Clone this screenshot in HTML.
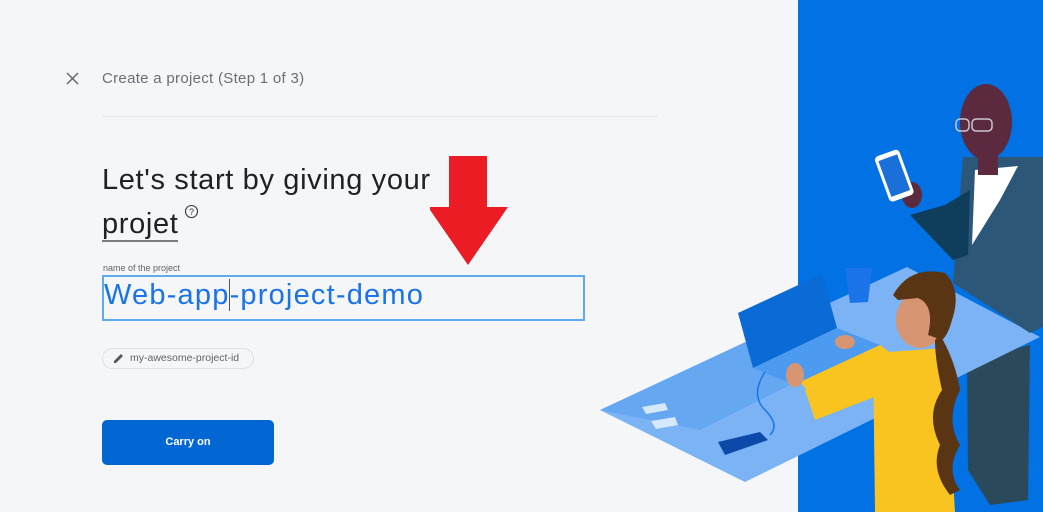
<!DOCTYPE html>
<html><head><meta charset="utf-8"><style>
html,body{margin:0;padding:0;width:1043px;height:512px;overflow:hidden;background:#f5f6f8;font-family:"Liberation Sans",sans-serif;position:relative}
.abs{position:absolute}
</style></head><body>
<div class="abs" style="left:798px;top:0;width:245px;height:512px;background:#0171e3"></div>

<svg class="abs" style="left:0;top:0" width="1043" height="512">
  <polygon points="967,360 1030,345 1028,500 990,505 968,470" fill="#2a4a5c"/>
  <polygon points="600,410 907,267 1040,337 745,482" fill="#7bb3f5"/>
  <polygon points="600,410 760,335 800,380 700,430" fill="#5ea2f0" opacity="0.7"/>
  <polygon points="738,313 822,274 837,328 753,368" fill="#0a6ad6"/>
  <polygon points="753,368 837,328 880,345 795,385" fill="#4d9bf0"/>
  <path d="M765,372 Q750,395 765,410 Q780,425 770,435" stroke="#1a73e8" stroke-width="1.5" fill="none"/>
  <polygon points="718,442 760,432 768,440 725,455" fill="#0b4aa8"/>
  <polygon points="642,407 665,403 668,410 646,414" fill="#d6e8fb"/>
  <polygon points="651,421 675,417 678,425 656,429" fill="#d6e8fb"/>
  <polygon points="845,268 872,268 868,302 850,303" fill="#1a73e8"/>
  <polygon points="963,157 1043,157 1043,327 1030,333 953,283" fill="#2d5778"/>
  <polygon points="945,205 970,190 968,255 953,260 910,215" fill="#0e3e5c"/>
  <polygon points="975,170 1018,166 1000,200 972,245" fill="#fff"/>
  <ellipse cx="986" cy="122" rx="26" ry="38" fill="#5c2a3e"/>
  <rect x="978" y="150" width="20" height="25" fill="#5c2a3e"/>
  <rect x="956" y="119" width="13" height="12" rx="4" fill="none" stroke="#c9c6d0" stroke-width="1.5"/>
  <rect x="972" y="119" width="20" height="12" rx="4" fill="none" stroke="#c9c6d0" stroke-width="1.5"/>
  <ellipse cx="912" cy="195" rx="10" ry="13" fill="#5c2a3e"/>
  <g transform="rotate(-20 893 175)"><rect x="881" y="152" width="26" height="48" rx="4" fill="#fff"/><rect x="884" y="157" width="20" height="38" fill="#1a6fd8"/></g>
  <path d="M800,382 L880,345 L900,360 L818,403 Z" fill="#f9c320"/>
  <path d="M873,353 L945,348 L955,512 L875,512 Z" fill="#f9c320"/>
  <path d="M805,390 L900,365 L905,385 L815,420 Z" fill="#f9c320"/>
  <ellipse cx="795" cy="375" rx="9" ry="12" fill="#d79572"/>
  <ellipse cx="845" cy="342" rx="10" ry="7" fill="#d79572"/>
  <ellipse cx="920" cy="320" rx="24" ry="28" fill="#d79572"/>
  <path d="M893,295 Q910,265 945,273 Q962,290 952,320 Q948,335 942,340 L928,335 Q935,305 918,298 L898,300 Z" fill="#5a3514"/>
  <path d="M940,335 Q955,360 960,390 Q945,420 960,445 Q945,470 960,490 L950,495 Q930,470 940,445 Q925,415 942,390 Q935,360 935,340 Z" fill="#5a3514"/>
</svg>

<svg class="abs" style="left:66px;top:72px" width="13" height="13"><path d="M1,1 L12,12 M12,1 L1,12" stroke="#666" stroke-width="1.5"/></svg>
<div class="abs" style="left:102px;top:70px;font-size:15px;letter-spacing:0.3px;color:#6b6f75">Create a project (Step 1 of 3)</div>
<div class="abs" style="left:102px;top:116px;width:556px;height:1px;background:#e3e5e8"></div>

<div class="abs" style="left:102px;top:158px;font-size:29px;letter-spacing:0.65px;color:#202124;line-height:44px">Let's start by giving your<br><span style="border-bottom:2px solid #7a7d82">projet</span></div>
<svg class="abs" style="left:184px;top:204px" width="15" height="15"><circle cx="7.5" cy="7.5" r="6" fill="none" stroke="#333" stroke-width="1.1"/><text x="7.5" y="11" font-size="9" text-anchor="middle" fill="#333" font-family="Liberation Sans">?</text></svg>

<svg class="abs" style="left:430px;top:155px" width="80" height="112"><polygon points="17,1 55,1 55,52 76,52 36,110 -4,52 17,52" fill="#ec1c24" transform="translate(2,0)"/></svg>

<div class="abs" style="left:103px;top:263px;font-size:9px;color:#5f6368">name of the project</div>
<div class="abs" style="left:102px;top:275px;width:479px;height:42px;border:2px solid #62aaf0;box-sizing:content-box;margin:-0.5px"></div>
<div class="abs" style="left:104px;top:279px;font-size:29px;letter-spacing:1.2px;color:#1a73e8">Web-app<span style="border-left:1px solid #555;margin-left:-1px"></span>-project-demo</div>

<div class="abs" style="left:102px;top:348px;width:152px;height:21px;border:1px solid #dcdfe3;border-radius:11px;box-sizing:border-box"></div>
<svg class="abs" style="left:113px;top:352px" width="12" height="12"><path d="M1,11 L1,9 L8,2 L10,4 L3,11 Z" fill="#555"/></svg>
<div class="abs" style="left:130px;top:352px;font-size:10.5px;color:#5f6368">my-awesome-project-id</div>

<div class="abs" style="left:102px;top:420px;width:172px;height:45px;background:#0267d2;border-radius:5px;color:#fff;font-weight:bold;font-size:11px;text-align:center;line-height:45px">Carry on</div>
</body></html>
